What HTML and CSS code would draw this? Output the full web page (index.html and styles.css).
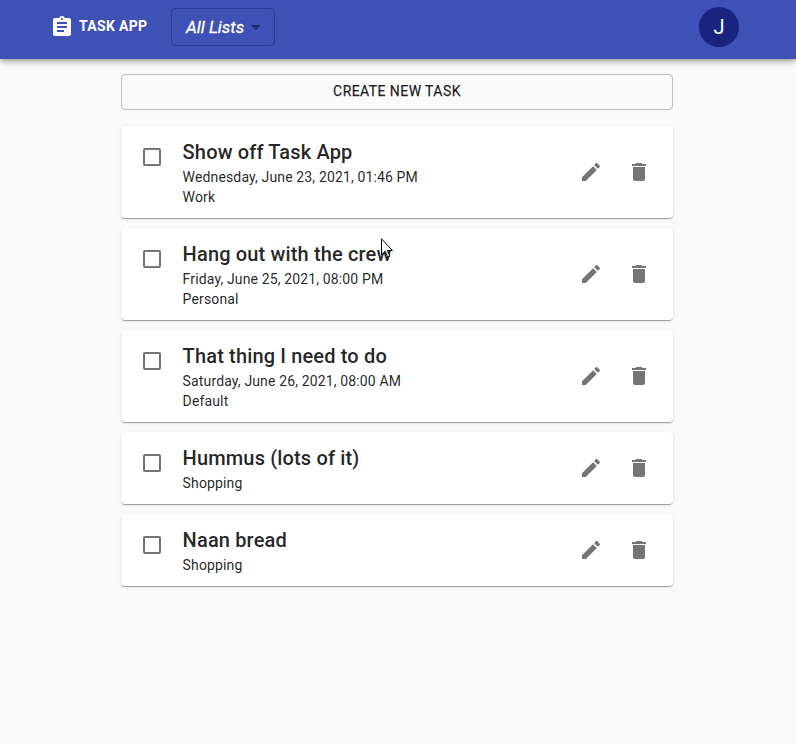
FILE: index.html
```html
<!DOCTYPE html>
<html lang="en">
<head>
<meta charset="utf-8">
<title>Task App</title>
<link rel="stylesheet" href="styles.css">
</head>
<body>
<svg class="defs" width="0" height="0">
<symbol id="box" viewBox="0 0 24 24"><path d="M19 5v14H5V5h14m0-2H5c-1.1 0-2 .9-2 2v14c0 1.1.9 2 2 2h14c1.1 0 2-.9 2-2V5c0-1.1-.9-2-2-2z"/></symbol>
<symbol id="edit" viewBox="0 0 24 24"><path d="M3 17.25V21h3.75L17.81 9.94l-3.75-3.75L3 17.25zM20.71 7.04c.39-.39.39-1.02 0-1.41l-2.34-2.34c-.39-.39-1.02-.39-1.41 0l-1.83 1.83 3.75 3.75 1.83-1.83z"/></symbol>
<symbol id="delete" viewBox="0 0 24 24"><path d="M6 19c0 1.1.9 2 2 2h8c1.1 0 2-.9 2-2V7H6v12zM19 4h-3.5l-1-1h-5l-1 1H5v2h14V4z"/></symbol>
</svg>
<header class="bar">
<svg class="logo" viewBox="0 0 24 24"><path d="M19 3h-4.18C14.4 1.84 13.3 1 12 1c-1.3 0-2.4.84-2.82 2H5c-1.1 0-2 .9-2 2v14c0 1.1.9 2 2 2h14c1.1 0 2-.9 2-2V5c0-1.1-.9-2-2-2zm-7 0c.55 0 1 .45 1 1s-.45 1-1 1-1-.45-1-1 .45-1 1-1zm2 14H7v-2h7v2zm3-4H7v-2h10v2zm0-4H7V7h10v2z"/></svg>
<span class="brand">TASK APP</span>
<button class="lists"><span>All Lists</span><svg viewBox="0 0 24 24"><path d="M7 10l5 5 5-5z"/></svg></button>
<div class="avatar">J</div>
</header>
<main>
<button class="create">CREATE NEW TASK</button>
<article class="card"><svg class="check"><use href="#box"/></svg><div class="info"><h2>Show off Task App</h2><p>Wednesday, June 23, 2021, 01:46 PM</p><p>Work</p></div><svg class="edit"><use href="#edit"/></svg><svg class="delete"><use href="#delete"/></svg></article>
<article class="card"><svg class="check"><use href="#box"/></svg><div class="info"><h2>Hang out with the crew</h2><p>Friday, June 25, 2021, 08:00 PM</p><p>Personal</p></div><svg class="edit"><use href="#edit"/></svg><svg class="delete"><use href="#delete"/></svg></article>
<article class="card"><svg class="check"><use href="#box"/></svg><div class="info"><h2>That thing I need to do</h2><p>Saturday, June 26, 2021, 08:00 AM</p><p>Default</p></div><svg class="edit"><use href="#edit"/></svg><svg class="delete"><use href="#delete"/></svg></article>
<article class="card"><svg class="check"><use href="#box"/></svg><div class="info"><h2>Hummus (lots of it)</h2><p>Shopping</p></div><svg class="edit"><use href="#edit"/></svg><svg class="delete"><use href="#delete"/></svg></article>
<article class="card"><svg class="check"><use href="#box"/></svg><div class="info"><h2>Naan bread</h2><p>Shopping</p></div><svg class="edit"><use href="#edit"/></svg><svg class="delete"><use href="#delete"/></svg></article>
</main>
<svg class="cursor" viewBox="0 0 12 21"><path d="M.5 .8v16l3.7-3.6 2.5 6 2.2-1-2.5-5.7h5z" fill="#fff" stroke="#000"/></svg>
</body>
</html>
```
FILE: styles.css
```css
* { box-sizing: border-box; }
body { margin: 0; min-height: 744px; background: #fafafa; color: rgba(0,0,0,.87); font-family: Roboto, sans-serif; position: relative; }
svg { display: block; fill: currentColor; }
.defs { position: absolute; }
button { font-family: inherit; margin: 0; }
.bar { height: 59px; padding: 0 57px 5px 50px; display: flex; align-items: center; background: #3f51b5; color: #fff; box-shadow: 0 2px 4px -1px rgba(0,0,0,.2), 0 4px 5px rgba(0,0,0,.14), 0 1px 10px rgba(0,0,0,.12); }
.logo { width: 24px; height: 24px; margin-right: 5px; }
.brand { width: 92px; padding-bottom: 2px; font-size: 14px; font-weight: 700; letter-spacing: .32px; white-space: nowrap; }
.lists { width: 104px; height: 38px; padding: 0 6px 0 14px; display: flex; align-items: center; justify-content: space-between; background: none; border: 1px solid #2f3c93; border-radius: 4px; color: #fff; font-size: 17px; font-style: italic; font-weight: 400; -webkit-text-stroke: .3px #fff; white-space: nowrap; }
.lists svg { width: 24px; height: 24px; fill: #1f2a72; }
.avatar { width: 40px; height: 40px; margin-left: auto; border-radius: 50%; background: #1a237e; display: flex; align-items: center; justify-content: center; font-size: 20px; }
main { width: 552px; margin: 15px 0 0 121px; }
.create { display: block; width: 552px; height: 36px; margin-bottom: 16px; padding: 0 0 2px; background: transparent; border: 1px solid #c2c2c2; border-radius: 4px; color: rgba(0,0,0,.87); font-size: 14px; font-weight: 400; letter-spacing: .43px; -webkit-text-stroke: .25px; }
.card { display: flex; align-items: center; margin-bottom: 10px; padding: 12px 22px 11px 19px; background: #fff; border-radius: 4px; box-shadow: 0 2px 1px -1px rgba(0,0,0,.2), 0 1px 1px rgba(0,0,0,.14), 0 1px 3px rgba(0,0,0,.12); }
.card svg { width: 24px; height: 24px; color: #757575; }
.card .check { align-self: flex-start; margin: 7px 19px 0 0; }
.info { flex: 1; margin-left: -.4px; }
.card .edit { margin: 0 24px 2px 0; }
.card .delete { margin-bottom: 2px; }
h2 { margin: 0 0 1px; font-size: 20px; line-height: 28px; font-weight: 500; letter-spacing: .15px; }
p { margin: 0; font-size: 14px; line-height: 20px; letter-spacing: .14px; }
.cursor { position: absolute; left: 381px; top: 238px; width: 12px; height: 21px; }
```
